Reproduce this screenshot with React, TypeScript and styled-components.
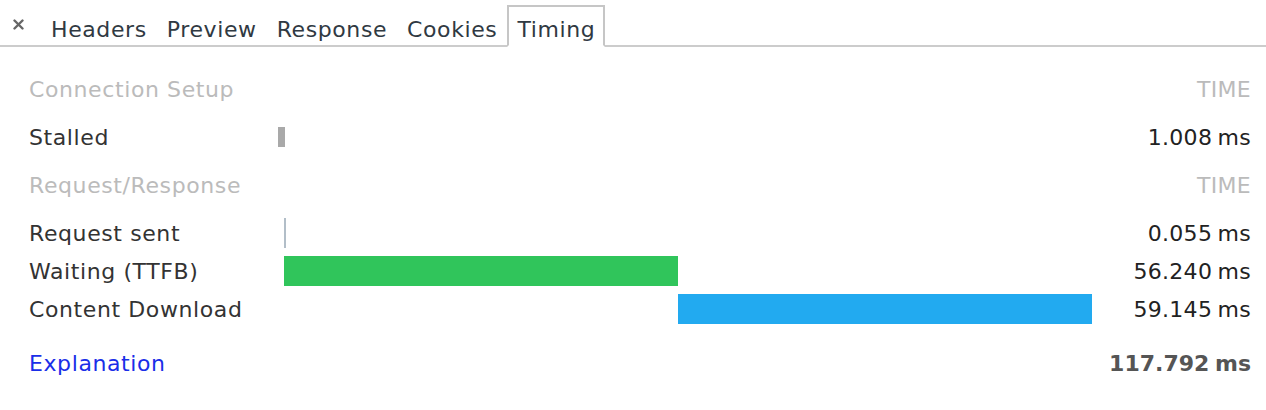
import React from 'react'
import styled, { createGlobalStyle } from 'styled-components'

const TOTAL = 117.792

interface Phase {
  label: string
  start: number
  duration: number
  color: string
  thin?: boolean
}

interface Section {
  title: string
  phases: Phase[]
}

// start offsets are in ms from the beginning of the request
const sections: Section[] = [
  {
    title: 'Connection Setup',
    phases: [{ label: 'Stalled', start: 0, duration: 1.008, color: '#a9a9a9', thin: true }],
  },
  {
    title: 'Request/Response',
    phases: [
      { label: 'Request sent', start: 0.857, duration: 0.055, color: '#b2bec8' },
      { label: 'Waiting (TTFB)', start: 0.857, duration: 56.24, color: '#30c55b' },
      { label: 'Content Download', start: 57.1, duration: 59.145, color: '#22aaf0' },
    ],
  },
]

const tabs = ['Headers', 'Preview', 'Response', 'Cookies', 'Timing']

const GlobalStyle = createGlobalStyle`
  html, body {
    margin: 0;
    padding: 0;
    background: #ffffff;
  }
  body {
    font-family: "DejaVu Sans", "Liberation Sans", sans-serif;
    font-size: 22px;
    letter-spacing: 0.6px;
    color: #333333;
  }
`

const Page = styled.div`
  width: 1266px;
  height: 410px;
  overflow: hidden;
`

const TabBar = styled.div`
  display: flex;
  align-items: flex-end;
  height: 45px;
  border-bottom: 2px solid #cccccc;
  padding-left: 8px;
`

const CloseButton = styled.div`
  align-self: stretch;
  width: 20px;
  box-sizing: border-box;
  padding-top: 3px;
  display: flex;
  align-items: center;
  justify-content: center;
  margin-right: 13px;
`

const Tab = styled.div<{ $active?: boolean }>`
  height: 42px;
  box-sizing: border-box;
  padding: 6px 8px 0;
  margin-bottom: -2px;
  display: flex;
  align-items: center;
  color: #303942;
  border: 2px solid ${({ $active }) => ($active ? '#c6c6c6' : 'transparent')};
  border-bottom: 2px solid ${({ $active }) => ($active ? '#ffffff' : 'transparent')};
`

const Body = styled.div`
  padding: 23px 15px 0 29px;
  display: flex;
  flex-direction: column;
  gap: 10px;
`

const Group = styled.div`
  display: flex;
  flex-direction: column;
`

const Row = styled.div<{ $gapAfter?: number }>`
  display: grid;
  grid-template-columns: 249px 825px 1fr;
  align-items: center;
  height: 38px;
  margin-bottom: ${({ $gapAfter }) => $gapAfter || 0}px;
`

const Label = styled.div<{ $muted?: boolean }>`
  color: ${({ $muted }) => ($muted ? '#bbbbbb' : '#333333')};
  white-space: nowrap;
`

const Track = styled.div`
  display: flex;
  align-items: center;
  height: 100%;
`

const Bar = styled.div<{ $color: string; $thin?: boolean }>`
  flex: none;
  background: ${({ $color }) => $color};
  height: ${({ $thin }) => ($thin ? 20 : 30)}px;
  min-width: 2px;
`

const Time = styled.div<{ $muted?: boolean; $bold?: boolean }>`
  text-align: right;
  white-space: nowrap;
  color: ${({ $muted, $bold }) => ($muted ? '#bbbbbb' : $bold ? '#555555' : '#222222')};
  font-weight: ${({ $bold }) => ($bold ? 700 : 400)};
  letter-spacing: ${({ $bold }) => ($bold ? '0' : '0.3px')};
  word-spacing: -2px;
`

const Footer = styled(Row)`
  margin-top: 6px;
`

const Link = styled.a`
  color: #1a2ee8;
  text-decoration: none;
`

const pct = (ms: number) => `${(ms / TOTAL) * 100}%`

const CloseIcon = () => (
  <svg width="11" height="11" viewBox="0 0 11 11">
    <path d="M1.5 1.5 L9.5 9.5 M9.5 1.5 L1.5 9.5" stroke="#666666" strokeWidth="2.4" strokeLinecap="round" />
  </svg>
)

const App: React.FC = () => {
  return (
    <Page>
      <GlobalStyle />
      <TabBar>
        <CloseButton>
          <CloseIcon />
        </CloseButton>
        {tabs.map((tab) => (
          <Tab key={tab} $active={tab === 'Timing'}>
            {tab}
          </Tab>
        ))}
      </TabBar>
      <Body>
        {sections.map((section) => (
          <Group key={section.title}>
            <Row $gapAfter={10}>
              <Label $muted>{section.title}</Label>
              <Track />
              <Time $muted>TIME</Time>
            </Row>
            {section.phases.map((phase) => (
              <Row key={phase.label}>
                <Label>{phase.label}</Label>
                <Track>
                  <Bar
                    $color={phase.color}
                    $thin={phase.thin}
                    style={{ marginLeft: pct(phase.start), width: pct(phase.duration) }}
                  />
                </Track>
                <Time>{phase.duration.toFixed(3)} ms</Time>
              </Row>
            ))}
          </Group>
        ))}
        <Footer>
          <Label>
            <Link href="#">Explanation</Link>
          </Label>
          <Track />
          <Time $bold>{TOTAL.toFixed(3)} ms</Time>
        </Footer>
      </Body>
    </Page>
  )
}

export default App
